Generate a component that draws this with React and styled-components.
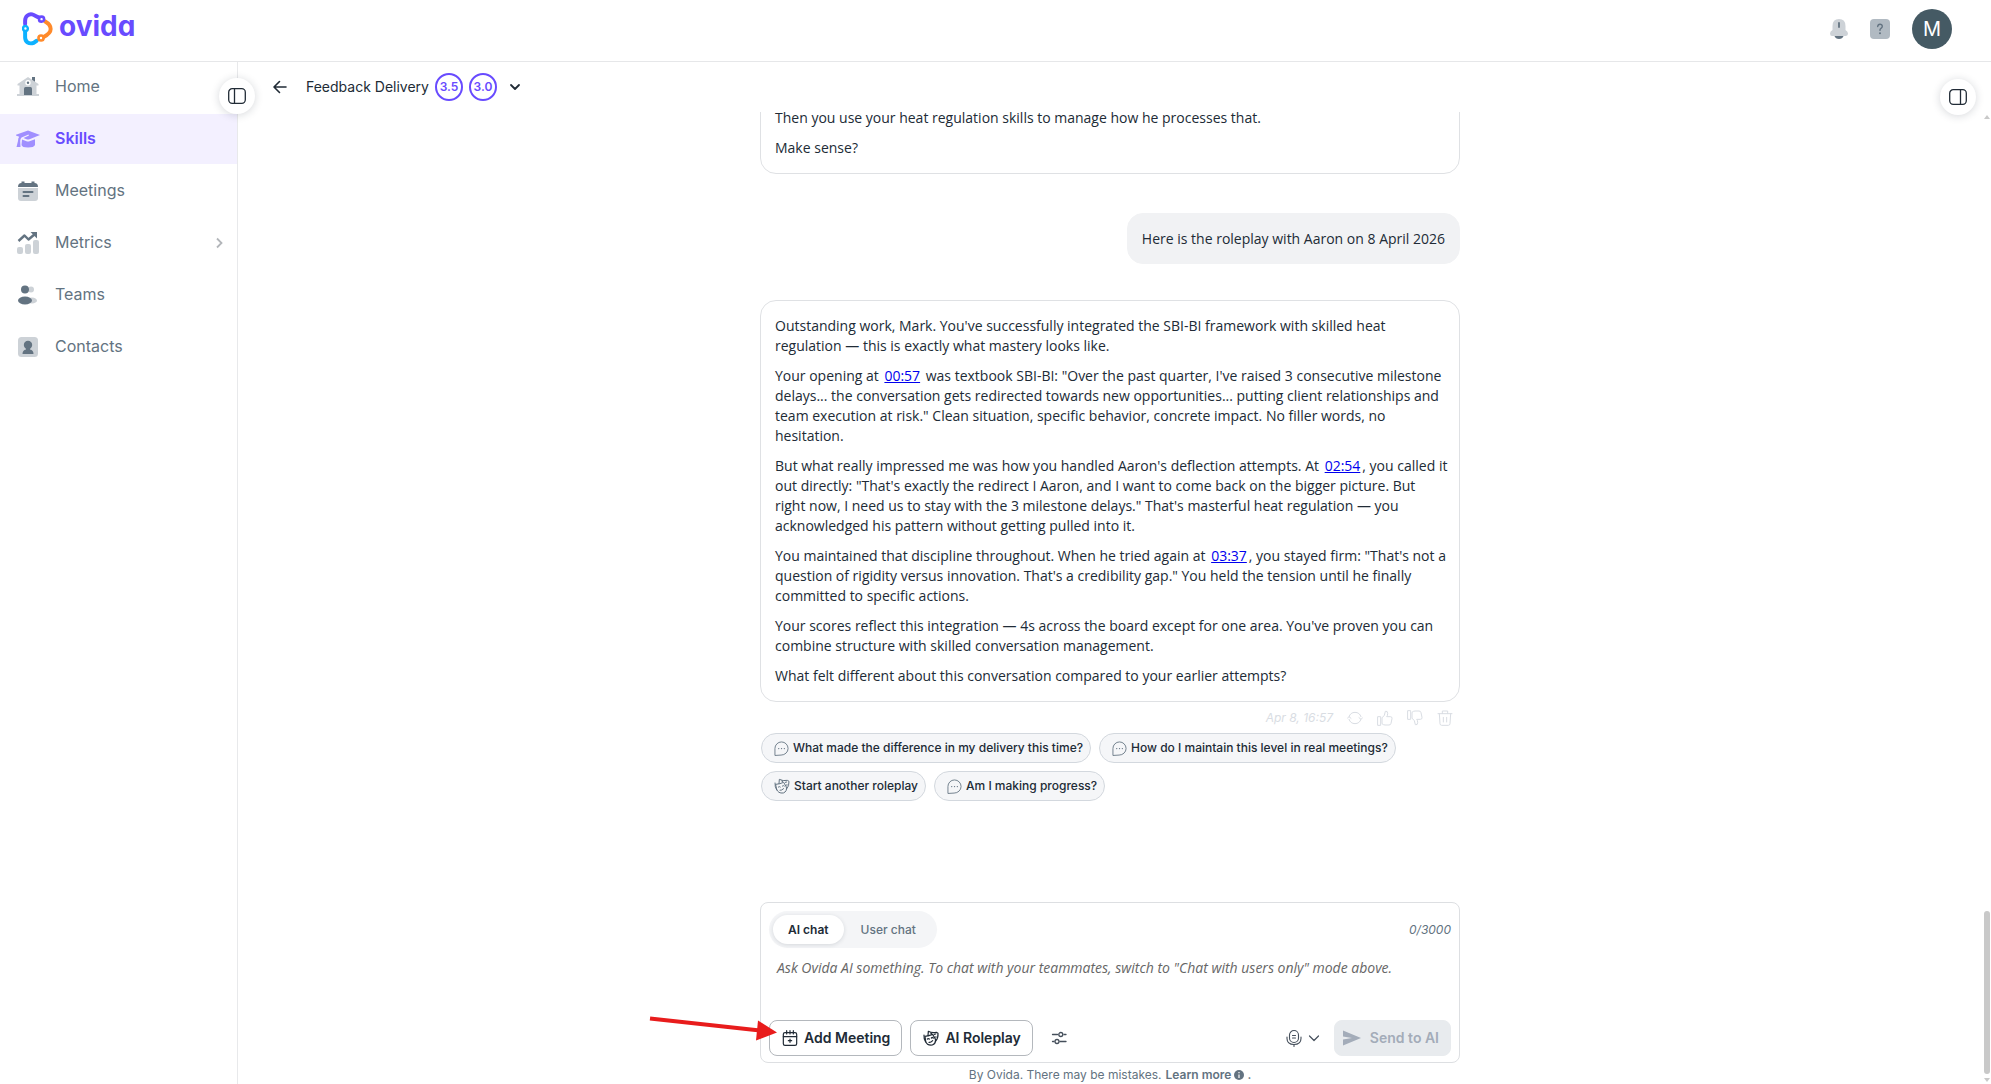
import React from "react";
import styled, { createGlobalStyle, css } from "styled-components";

const Global = createGlobalStyle`
  *, *::before, *::after { box-sizing: border-box; }
  body {
    margin: 0;
    background: #fff;
    color: #212b36;
    font-family: Inter, "Liberation Sans", sans-serif;
    font-size: 14px;
    line-height: 20px;
  }
  button, textarea { font: inherit; color: inherit; }
  button { cursor: pointer; }
  p, h1 { margin: 0; }
  svg { display: block; flex: none; }
`;

const Page = styled.div`
  position: relative;
  height: 100vh;
  display: grid;
  grid-template-rows: 62px minmax(0, 1fr);
  grid-template-columns: 238px minmax(0, 1fr);
  overflow: hidden;
`;

const Header = styled.header`
  grid-column: 1 / -1;
  display: flex;
  align-items: center;
  justify-content: space-between;
  padding: 0 39px 4px 22px;
  border-bottom: 1px solid #e6e7e9;
`;

const Brand = styled.a`
  display: flex;
  align-items: center;
  gap: 5px;
  color: #684bff;
  text-decoration: none;
`;

const Wordmark = styled.span`
  padding-bottom: 6px;
  font-size: 28px;
  line-height: 32px;
  font-weight: 700;
  font-feature-settings: "cv11";
`;

const HeaderActions = styled.div`
  display: flex;
  align-items: center;
  gap: 22px;
`;

const PlainButton = styled.button`
  display: flex;
  align-items: center;
  padding: 0;
  border: 0;
  background: none;
`;

const Avatar = styled.button`
  width: 40px;
  height: 40px;
  padding: 0;
  border: 0;
  border-radius: 50%;
  background: #455a64;
  color: #fff;
  font-size: 20px;
`;

const Sidebar = styled.aside`
  position: relative;
  border-right: 1px solid #e8e9eb;
`;

const Nav = styled.nav`
  display: flex;
  flex-direction: column;
  gap: 2px;
`;

const NavItem = styled.a`
  display: grid;
  grid-template-columns: 24px 1fr auto;
  align-items: center;
  gap: 15px;
  height: 50px;
  padding: 0 12px 0 16px;
  font-size: 16px;
  color: #637381;
  text-decoration: none;
  ${(p) => p.$active && css`
    background: #f3f0ff;
    color: #684bff;
    font-weight: 600;
  `}
`;

const NavLabel = styled.span`
  padding-bottom: 2px;
`;

const PanelToggle = styled.button`
  position: absolute;
  z-index: 2;
  top: ${(p) => p.$top}px;
  right: ${(p) => p.$right}px;
  width: 36px;
  height: 36px;
  display: grid;
  place-items: center;
  padding: 0;
  border: 0;
  border-radius: 50%;
  background: #fff;
  box-shadow: 0 1px 8px rgba(30, 40, 55, 0.18);
`;

const Main = styled.main`
  position: relative;
  display: flex;
  flex-direction: column;
  min-height: 0;
`;

const SkillBar = styled.div`
  display: flex;
  align-items: center;
  flex: none;
  height: 50px;
  padding-left: 32px;
`;

const SkillName = styled.h1`
  margin: 0 6px 0 16px;
  font-size: 14px;
  font-weight: 400;
`;

const Scores = styled.div`
  display: flex;
  gap: 6px;
  margin-right: 10px;
`;

const Score = styled.span`
  width: 28px;
  height: 28px;
  display: grid;
  place-items: center;
  border: 2px solid #684bff;
  border-radius: 50%;
  color: #684bff;
  font-size: 12px;
  font-weight: 600;
`;

const Body = styled.div`
  flex: 1;
  min-height: 0;
  display: grid;
  grid-template-columns: minmax(0, 1fr) 9px;
`;

const Conversation = styled.section`
  min-height: 0;
  display: flex;
  flex-direction: column;
  align-items: center;
`;

const Thread = styled.div`
  flex: 1;
  min-height: 0;
  width: 100%;
  max-width: 700px;
  display: flex;
  flex-direction: column;
  justify-content: flex-end;
  overflow: hidden;
  padding-bottom: 101px;
`;

const Message = styled.article`
  flex: none;
  display: flex;
  flex-direction: column;
  gap: 10px;
  padding: 15px 8px 15px 14px;
  border: 1px solid #dfe1e4;
  border-radius: 16px;
  font-family: "Open Sans", "Liberation Sans", sans-serif;
`;

const UserMessage = styled(Message)`
  align-self: flex-end;
  margin: 39px 0 36px;
  padding: 15px 14px 14px;
  border-color: #f1f2f4;
  background: #f1f2f4;
`;

const TimeLink = styled.a`
  margin: 0 2px;
  color: #0000ee;
`;

const Meta = styled.div`
  display: flex;
  align-items: center;
  justify-content: flex-end;
  flex: none;
  gap: 14px;
  height: 31px;
  padding-right: 7px;
  color: #d9dde3;
  font-size: 12px;
  font-style: italic;
`;

const Chips = styled.div`
  display: flex;
  flex-wrap: wrap;
  flex: none;
  gap: 8px;
  padding-left: 1px;
`;

const Chip = styled.button`
  display: flex;
  align-items: center;
  gap: 4px;
  height: 30px;
  padding: 0 7px 0 12px;
  border: 1px solid #d3d8de;
  border-radius: 15px;
  background: #f5f6f8;
  font-size: 12px;
  font-weight: 500;
  white-space: nowrap;
  svg { color: #637381; }
`;

const ComposerWrap = styled.div`
  position: relative;
  width: 100%;
  max-width: 700px;
  flex: none;
`;

const Composer = styled.form`
  display: flex;
  flex-direction: column;
  padding: 8px 8px 6px;
  border: 1px solid #dddfe2;
  border-radius: 8px;
`;

const Row = styled.div`
  display: flex;
  align-items: center;
  justify-content: space-between;
`;

const Modes = styled.div`
  display: flex;
  padding: 4px;
  border-radius: 19px;
  background: #f4f5f7;
`;

const Mode = styled.button`
  height: 29px;
  padding: 0 ${(p) => (p.$active ? 15 : 17)}px;
  border: 0;
  border-radius: 15px;
  background: none;
  font-size: 12px;
  font-weight: 500;
  color: #637381;
  ${(p) => p.$active && css`
    background: #fff;
    color: #212b36;
    font-weight: 600;
    box-shadow: 0 1px 4px rgba(30, 40, 55, 0.14);
  `}
`;

const Counter = styled.span`
  font-size: 12px;
  font-style: italic;
  color: #637381;
`;

const Prompt = styled.textarea`
  display: block;
  width: 100%;
  height: 72px;
  padding: 10px 0 10px 8px;
  border: 0;
  outline: 0;
  resize: none;
  background: none;
  font-family: "Open Sans", "Liberation Sans", sans-serif;
  font-style: italic;
  &::placeholder { color: #666; opacity: 1; }
`;

const Actions = styled.div`
  display: flex;
  align-items: center;
  gap: 8px;
`;

const ActionButton = styled.button`
  display: flex;
  align-items: center;
  gap: 6px;
  height: 36px;
  padding: 0 11px 0 12px;
  border: 1px solid #b4b8bd;
  border-radius: 8px;
  background: #fff;
  font-size: 14px;
  font-weight: 600;
  white-space: nowrap;
`;

const SendButton = styled(ActionButton)`
  gap: 9px;
  padding-left: 8px;
  border-color: #e8ebee;
  background: #e8ebee;
  color: #a3acb9;
`;

const IconSlot = styled(PlainButton)`
  margin: 0 ${(p) => p.$space}px;
  gap: 5px;
  color: #454f5b;
`;

const Disclaimer = styled.p`
  flex: none;
  display: flex;
  align-items: center;
  gap: 4px;
  height: 21px;
  padding-top: 2px;
  font-size: 12px;
  color: #637381;
`;

const LearnMore = styled.a`
  display: flex;
  align-items: center;
  gap: 3px;
  color: inherit;
  font-weight: 600;
  text-decoration: none;
`;

const Scrollbar = styled.div`
  display: flex;
  flex-direction: column;
  align-items: flex-end;
  justify-content: space-between;
  padding: 3px 1px 2px 0;
`;

const ScrollEnd = styled.div`
  display: flex;
  flex-direction: column;
  align-items: center;
  gap: 4px;
`;

const Thumb = styled.div`
  width: 6px;
  height: 163px;
  border-radius: 3px;
  background: #c9c9c9;
`;

const Pointer = styled.svg`
  position: absolute;
  z-index: 3;
  left: -112px;
  bottom: 12px;
  pointer-events: none;
`;

function Line({ size = 16, width = 1.5, box = 24, children }) {
  return (
    <svg width={size} height={size} viewBox={`0 0 ${box} ${box}`} fill="none" stroke="currentColor"
      strokeWidth={width} strokeLinecap="round" strokeLinejoin="round" aria-hidden="true">
      {children}
    </svg>
  );
}

const Logo = () => (
  <svg width="32" height="34" viewBox="0.5 1 28.500 31" fill="none" strokeWidth="3.6" strokeLinecap="round" aria-hidden="true">
    <path d="M3 12V9C3 4.500 6.500 2.600 9.500 3.200C12.500 3.800 12.500 5.500 16 6" stroke="#684bff" />
    <path d="M21 9.500C24.500 11.500 26.300 13.500 26.300 16.500C26.300 20 22.500 22.500 19.500 24" stroke="#ff8a2b" />
    <path d="M3 19V24C3 28.500 6.500 30 9.500 29.500C11.500 29.200 12 28 13.500 27.300" stroke="#0db2ff" />
    <circle cx="18" cy="7.500" r="2.300" stroke="#684bff" strokeWidth="2.400" fill="#fff" />
    <circle cx="17.500" cy="24.700" r="2.300" stroke="#ff8a2b" strokeWidth="2.400" fill="#fff" />
    <circle cx="3.300" cy="16" r="2.200" stroke="#0db2ff" strokeWidth="2.200" fill="#fff" />
  </svg>
);

const L = "#cdd2d7";
const D = "#637381";
const navIcons = {
  Home: (
    <>
      <path d="M16 2h3v6h-3z" fill={D} />
      <path d="M12 2 1.500 9v1.500H3.500V19H1v2h22v-2h-2.500v-8.500h2V9z" fill={L} />
      <path d="M8 20v-6.500Q8 12 9.500 12h5Q16 12 16 13.500V20z" fill={D} />
      <circle cx="12" cy="7.800" r="2.700" fill="#fff" />
      <circle cx="12" cy="7.800" r="1.200" fill={D} />
    </>
  ),
  Skills: (
    <g fill="#a08fff">
      <path d="M12 3.500 24 8 13.500 12.200Q12 12.700 10.500 12.200L7.500 11 13 8.600 12.500 7.600 5.500 10.500Q4.300 11.500 4.200 14L4.500 20H.5L2 14Q2 11 3.200 9.800L0 8.500V7.800z" />
      <path d="M6 12.500 10.500 14.300Q12 14.800 13.500 14.300L19 12.200V18Q18 20.500 12 20.500T5.500 18z" />
    </g>
  ),
  Meetings: (
    <>
      <path d="M2 9h20v10q0 3-3 3H5q-3 0-3-3z" fill={L} />
      <path d="M2 8q0-4 3.500-4V2.500h3V4h7V2.500h3V4Q22 4 22 8z" fill={D} />
      <path d="M7.500 13h9M7.500 17h5" stroke={D} strokeWidth="2" strokeLinecap="round" />
    </>
  ),
  Metrics: (
    <>
      <rect x="1" y="16" width="6" height="7" rx="2" fill={L} />
      <rect x="9" y="13" width="6" height="10" rx="2" fill={L} />
      <rect x="17" y="9" width="6" height="14" rx="2" fill={L} />
      <path d="M2.500 10 8.500 4.500 12.500 8.500 19 3" stroke={D} strokeWidth="2.400" fill="none" strokeLinejoin="round" />
      <path d="M14.500 1H21v6.500z" fill={D} />
    </>
  ),
  Teams: (
    <>
      <circle cx="15" cy="6.500" r="3" fill={L} />
      <ellipse cx="16" cy="17.500" rx="5" ry="3" fill={L} />
      <circle cx="9" cy="6.500" r="4" fill={D} />
      <ellipse cx="9" cy="17.500" rx="7" ry="4" fill={D} />
    </>
  ),
  Contacts: (
    <>
      <rect x="2" y="2" width="20" height="20" rx="3.500" fill={L} />
      <circle cx="12" cy="10" r="4.200" fill={D} />
      <path d="M10 12h4v2.500q3.500.5 3.500 4.500h-11q0-4 3.500-4.500z" fill={D} />
    </>
  ),
};

const NavIcon = ({ name }) => (
  <svg width="24" height="24" viewBox="0 0 24 24" aria-hidden="true">{navIcons[name]}</svg>
);

const PanelIcon = ({ bar }) => (
  <svg width="18" height="18" viewBox="0 0 18 18" fill="none" stroke="#212b36" strokeWidth="1.300" aria-hidden="true">
    <rect x=".7" y="1.700" width="16.600" height="14.600" rx="3.500" />
    <path d={`M${bar} 2v14`} />
  </svg>
);

const ChatIcon = () => (
  <Line size={15} width={1.4}>
    <path d="M1.500 22.500V12A10.500 10.500 0 1 1 12 22.500z" />
    <path d="M7.500 12h.1M12 12h.1M16.500 12h.1" strokeWidth="2" />
  </Line>
);

const MaskIcon = ({ size = 16, width = 1.5 }) => (
  <Line size={size} width={width}>
    <path d="M3 9.500Q9 9 14.500 6.500L18.500 13.500Q20 20 14 22.500Q6 23.500 4 17z" />
    <path d="M7.500 8.500 8 2Q13.500 5 20 3.500L22.500 5Q23 12 19 16.500" />
    <path d="M1.500 7.500Q1 13 4 18M11.500 4.500l1.500 1M17 6.500l2-.5M6.500 13.500q1.500-1.500 3 0M12.500 12q1.500-1.500 3 0M9 18.500q2.500.5 5.500-2.500M18.500 10.500h1.500" />
  </Line>
);

const CalendarIcon = () => (
  <Line size={16} width={1.8}>
    <rect x="2" y="4" width="20" height="19" rx="2.500" />
    <path d="M2 10h20M7 1v5M12 1v5M17 1v5M12 13.500v5M9.500 16h5" />
  </Line>
);

const navItems = ["Home", "Skills", "Meetings", "Metrics", "Teams", "Contacts"];
const chips = [
  ["What made the difference in my delivery this time?", ChatIcon],
  ["How do I maintain this level in real meetings?", ChatIcon],
  ["Start another roleplay", MaskIcon],
  ["Am I making progress?", ChatIcon],
];

export default function App() {
  return (
    <>
      <Global />
      <Page>
        <Header>
          <Brand href="#" aria-label="ovida">
            <Logo />
            <Wordmark>ovida</Wordmark>
          </Brand>
          <HeaderActions>
            <PlainButton aria-label="Notifications">
              <svg width="18" height="22" viewBox="1 0 18 22" aria-hidden="true">
                <path d="M10 1q6.500 0 6.500 7v4q2.500 1.500 2.500 3.500T17 18H3q-2 0-2-2.500T3.500 12V8Q3.500 1 10 1z" fill={L} />
                <path d="M5.500 18h9q-1 3-4.500 3t-4.500-3z" fill="#637381" />
                <path d="M10 5v4" stroke="#637381" strokeWidth="1.800" strokeLinecap="round" />
              </svg>
            </PlainButton>
            <PlainButton aria-label="Help">
              <svg width="20" height="20" viewBox="0 0 20 20" fill="none" aria-hidden="true">
                <rect width="20" height="20" rx="4" fill="#b1bac2" />
                <path d="M7.700 7.500Q7.900 5.200 10 5.200T12.300 7.300Q12.300 8.500 11 9.300T10 11.300" stroke="#637381" strokeWidth="1.400" strokeLinecap="round" />
                <circle cx="10" cy="14.200" r="1" fill="#637381" />
              </svg>
            </PlainButton>
            <Avatar aria-label="Account">M</Avatar>
          </HeaderActions>
        </Header>

        <Sidebar>
          <Nav>
            {navItems.map((name) => (
              <NavItem key={name} href="#" $active={name === "Skills"}>
                <NavIcon name={name} />
                <NavLabel>{name}</NavLabel>
                {name === "Metrics" && (
                  <svg width="12" height="14" viewBox="1 0 12 14" fill="none" stroke="#b3b6ba" strokeWidth="1.800" aria-hidden="true">
                    <path d="M5 2.500 9.500 7 5 11.500" />
                  </svg>
                )}
              </NavItem>
            ))}
          </Nav>
          <PanelToggle aria-label="Toggle sidebar" $top={16} $right={-18}>
            <PanelIcon bar={6.5} />
          </PanelToggle>
        </Sidebar>

        <Main>
          <SkillBar>
            <PlainButton aria-label="Back">
              <Line size={20} width={1.6} box={20}>
                <path d="M16 10H4.500M9.500 4.500 4 10l5.500 5.500" />
              </Line>
            </PlainButton>
            <SkillName>Feedback Delivery</SkillName>
            <Scores>
              <Score>3.5</Score>
              <Score>3.0</Score>
            </Scores>
            <PlainButton aria-label="Show score details">
              <Line size={16} width={1.8} box={16}>
                <path d="M4 6l4 4 4-4" />
              </Line>
            </PlainButton>
          </SkillBar>
          <PanelToggle aria-label="Toggle details" $top={17} $right={15}>
            <PanelIcon bar={11.5} />
          </PanelToggle>

          <Body>
            <Conversation>
              <Thread>
                <Message>
                  <p>Then you use your heat regulation skills to manage how he processes that.</p>
                  <p>Make sense?</p>
                </Message>
                <UserMessage>
                  <p>Here is the roleplay with Aaron on 8 April 2026</p>
                </UserMessage>
                <Message>
                  <p>Outstanding work, Mark. You've successfully integrated the SBI-BI framework with skilled heat<br />regulation — this is exactly what mastery looks like.</p>
                  <p>Your opening at <TimeLink href="#">00:57</TimeLink> was textbook SBI-BI: "Over the past quarter, I've raised 3 consecutive milestone<br />delays... the conversation gets redirected towards new opportunities... putting client relationships and<br />team execution at risk." Clean situation, specific behavior, concrete impact. No filler words, no<br />hesitation.</p>
                  <p>But what really impressed me was how you handled Aaron's deflection attempts. At <TimeLink href="#">02:54</TimeLink>, you called it<br />out directly: "That's exactly the redirect I Aaron, and I want to come back on the bigger picture. But<br />right now, I need us to stay with the 3 milestone delays." That's masterful heat regulation — you<br />acknowledged his pattern without getting pulled into it.</p>
                  <p>You maintained that discipline throughout. When he tried again at <TimeLink href="#">03:37</TimeLink>, you stayed firm: "That's not a<br />question of rigidity versus innovation. That's a credibility gap." You held the tension until he finally<br />committed to specific actions.</p>
                  <p>Your scores reflect this integration — 4s across the board except for one area. You've proven you can<br />combine structure with skilled conversation management.</p>
                  <p>What felt different about this conversation compared to your earlier attempts?</p>
                </Message>
                <Meta>
                  <span>Apr 8, 16:57</span>
                  <PlainButton aria-label="Regenerate">
                    <Line size={16} width={1.5}>
                      <path d="M3 10A9.500 9.500 0 0 1 21 10M21 14A9.500 9.500 0 0 1 3 14M.5 12.500 3 10l3 2.500M18 11.500l3 2.500 2.500-2.500" />
                    </Line>
                  </PlainButton>
                  <PlainButton aria-label="Good response">
                    <Line size={16} width={1.5}>
                      <path d="M1.500 10h4v13h-4zM8 11.500Q12 9 12.500 2Q16 1 16 5T14.500 10H20Q23 10 22.500 13L21 20Q20.500 22.500 18 22.500H12Q10 22.500 8 21z" />
                    </Line>
                  </PlainButton>
                  <PlainButton aria-label="Bad response">
                    <Line size={16} width={1.5}>
                      <path d="M1.500 1h4v13h-4zM8 12.500Q12 15 12.500 22Q16 23 16 19T14.500 14H20Q23 14 22.500 11L21 4Q20.500 1.500 18 1.500H12Q10 1.500 8 3z" />
                    </Line>
                  </PlainButton>
                  <PlainButton aria-label="Delete">
                    <Line size={16} width={1.5}>
                      <path d="M1.500 5.500h21M8 5.500V1.500h8v4M3.500 5.500 4.500 20.500Q4.700 23 7 23h10q2.300 0 2.500-2.500l1-15M9.500 11v7M14.500 11v7" />
                    </Line>
                  </PlainButton>
                </Meta>
                <Chips>
                  {chips.map(([label, Icon]) => (
                    <Chip key={label}><Icon />{label}</Chip>
                  ))}
                </Chips>
              </Thread>

              <ComposerWrap>
                <Composer onSubmit={(e) => e.preventDefault()}>
                  <Row>
                    <Modes>
                      <Mode type="button" $active>AI chat</Mode>
                      <Mode type="button">User chat</Mode>
                    </Modes>
                    <Counter>0/3000</Counter>
                  </Row>
                  <Prompt
                    aria-label="Message"
                    placeholder={'Ask Ovida AI something. To chat with your teammates, switch to "Chat with users only" mode above.'}
                  />
                  <Row>
                    <Actions>
                      <ActionButton type="button"><CalendarIcon />Add Meeting</ActionButton>
                      <ActionButton type="button"><MaskIcon size={16} width={1.8} />AI Roleplay</ActionButton>
                      <IconSlot type="button" aria-label="Settings" $space={10}>
                        <Line size={16} width={1.3} box={16}>
                          <path d="M1.500 4.500h5M13 4.500h2M1.500 11.500h1.500M9 11.500h6" />
                          <circle cx="9.800" cy="4.500" r="2" />
                          <circle cx="6" cy="11.500" r="2" />
                        </Line>
                      </IconSlot>
                    </Actions>
                    <Actions>
                      <IconSlot type="button" aria-label="Voice input" $space={6}>
                        <Line size={18} width={1.1} box={18}>
                          <rect x="4.500" y="1.500" width="9" height="12" rx="4.500" />
                          <path d="M2 8v1.500Q2 15.500 9 15.500T16 9.500V8M9 15.500v2M7.500 6.500h3M7.500 9h3" />
                        </Line>
                        <Line size={12} width={1.2} box={12}>
                          <path d="M1.500 4 6 8.500 10.500 4" />
                        </Line>
                      </IconSlot>
                      <SendButton type="submit" disabled>
                        <svg width="18" height="16" viewBox="0 0 18 16" fill="#a3acb9" aria-hidden="true">
                          <path d="M0 .5 18 8 0 15.500V9.500L9 8 0 6.500z" />
                        </svg>
                        Send to AI
                      </SendButton>
                    </Actions>
                  </Row>
                </Composer>
                <Pointer width="132" height="40" viewBox="0 0 132 40" aria-hidden="true">
                  <path d="M2 7.500 112 19.500" stroke="#e81c1c" strokeWidth="4" />
                  <path d="M110 9.500 129 21.500 108 29.500z" fill="#e81c1c" />
                </Pointer>
              </ComposerWrap>
              <Disclaimer>
                By Ovida. There may be mistakes.
                <LearnMore href="#">
                  Learn more
                  <svg width="10" height="10" viewBox="0 0 10 10" aria-hidden="true">
                    <circle cx="5" cy="5" r="5" fill="#637381" />
                    <path d="M5 2v1.200M5 4.400V8" stroke="#fff" strokeWidth="1.200" />
                  </svg>
                  .
                </LearnMore>
              </Disclaimer>
            </Conversation>
            <Scrollbar aria-hidden="true">
              <svg width="6" height="4" viewBox="0 0 6 4"><path d="M0 4 3 0l3 4z" fill="#c9c9c9" /></svg>
              <ScrollEnd>
                <Thumb />
                <svg width="6" height="4" viewBox="0 0 6 4"><path d="M0 0h6L3 4z" fill="#c9c9c9" /></svg>
              </ScrollEnd>
            </Scrollbar>
          </Body>
        </Main>
      </Page>
    </>
  );
}
